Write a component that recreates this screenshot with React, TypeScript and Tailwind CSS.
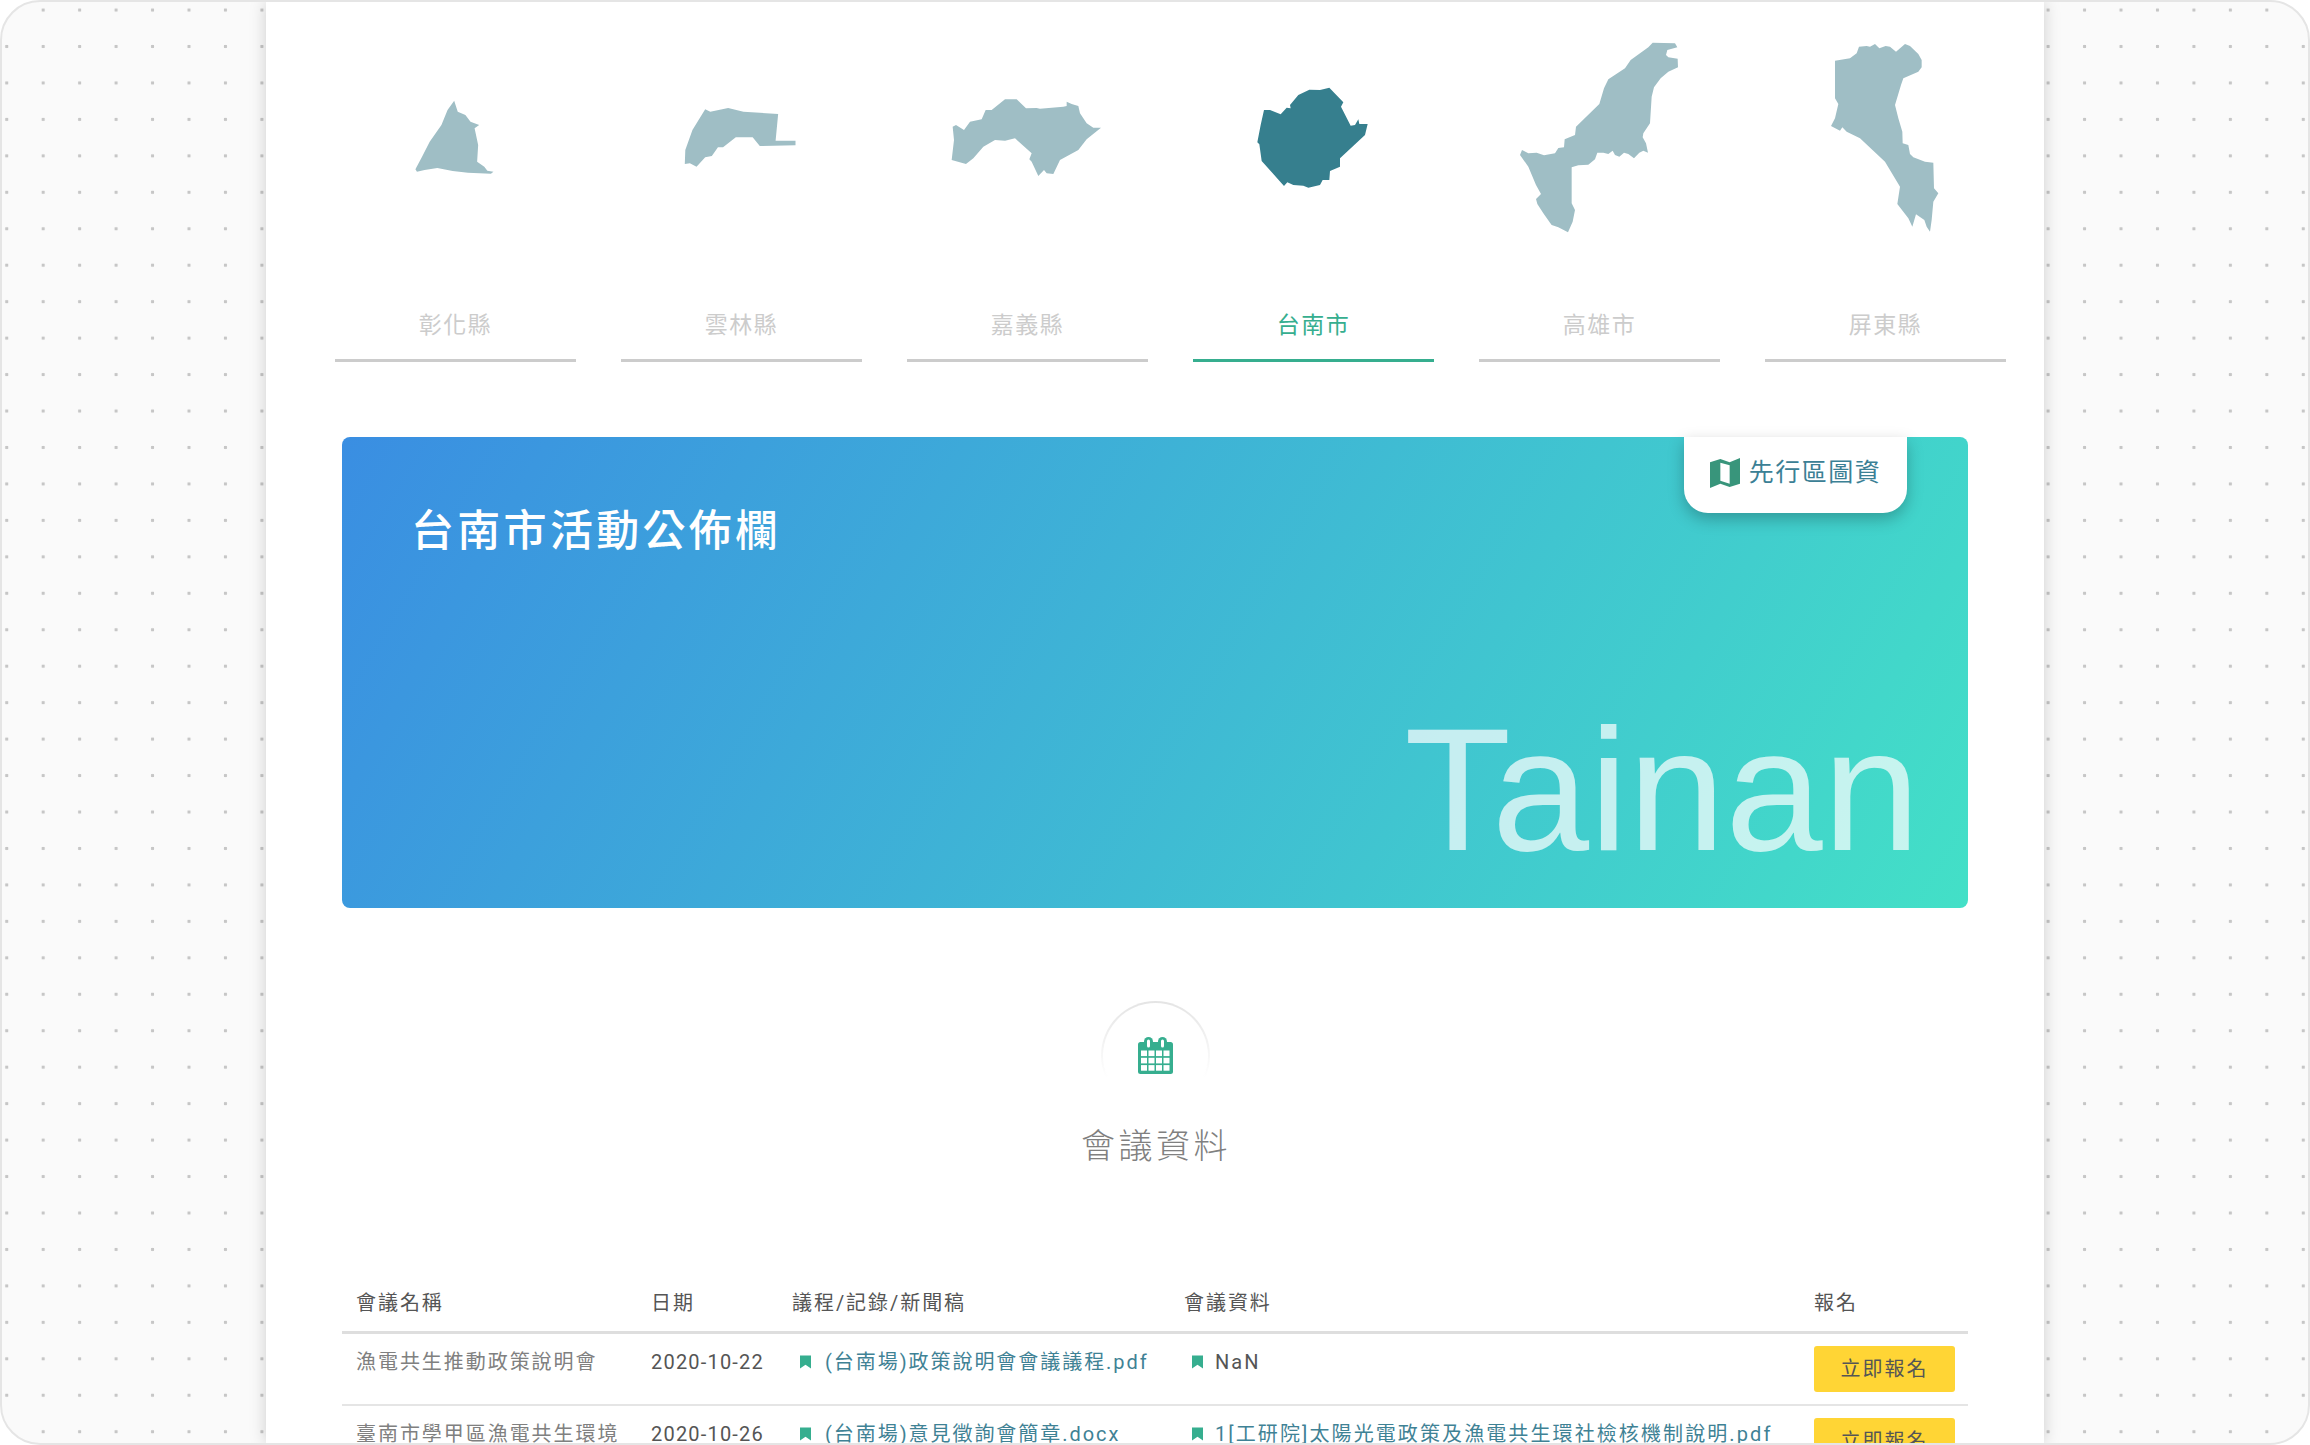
const FONT = "font-['Roboto','Noto_Sans_CJK_TC',sans-serif]";

const regions = [
  {
    name: "彰化縣",
    transform: "translate(-45,-30) scale(1.5306,1)",
    d: "M263,242 L270,275 L285,285 L295,305 L312,315 L303,325 L310,375 L308,425 L322,440 L328,452 L340,455 L335,461 L290,458 L260,453 L230,444 L205,450 L190,455 L187,448 L200,410 L215,365 L238,315 L250,270 Z",
  },
  {
    name: "雲林縣",
    transform: "translate(-903,-30) scale(1.5306,1)",
    d: "M755,268 L765,275 L800,264 L830,275 L898,282 L893,362 L932,362 L932,376 L862,378 L848,352 L815,352 L790,382 L780,382 L768,408 L755,412 L738,440 L725,430 L715,432 L716,390 L730,330 Z",
  },
  {
    name: "嘉義縣",
    transform: "translate(99,180)",
    d: "M195,28 L230,28 L258,55 L290,54 L300,56 L370,50 L380,48 L380,35 L395,42 L415,48 L420,70 L440,100 L460,113 L483,113 L440,148 L415,180 L360,210 L340,252 L320,250 L312,240 L295,258 L275,215 L268,208 L275,190 L225,145 L195,152 L165,150 L130,170 L100,205 L78,222 L35,210 L42,150 L38,110 L48,105 L72,120 L90,95 L125,88 L137,60 L155,60 Z",
  },
  {
    name: "台南市",
    active: true,
    transform: "translate(141,135)",
    d: "M208,44 L240,45 L268,38 L310,82 L303,95 L332,152 L345,150 L355,133 L358,147 L383,147 L375,180 L300,250 L300,275 L270,288 L268,315 L248,315 L240,330 L205,338 L190,332 L160,330 L142,322 L132,333 L65,258 L58,208 L52,202 L62,150 L72,105 L90,105 L122,118 L140,98 L152,100 L150,90 L175,60 Z",
  },
  {
    name: "高雄市",
    transform: "translate(63,0)",
    d: "M458,38 L525,40 L532,52 L502,60 L498,75 L505,82 L533,86 L534,112 L505,125 L482,145 L462,172 L455,200 L450,280 L430,310 L428,322 L438,340 L444,368 L430,362 L418,368 L402,385 L385,372 L372,368 L358,380 L345,375 L338,362 L325,372 L310,368 L292,368 L285,388 L265,404 L235,406 L215,412 L215,520 L225,540 L218,575 L204,607 L175,592 L155,585 L150,578 L130,550 L112,522 L108,507 L123,492 L108,465 L85,410 L60,375 L66,360 L85,370 L110,368 L132,376 L165,370 L175,354 L192,352 L194,328 L225,315 L228,290 L298,222 L312,175 L325,148 L375,115 L392,90 L445,52 Z",
  },
  {
    name: "屏東縣",
    transform: "translate(150,0)",
    d: "M132,50 L155,48 L165,50 L180,42 L193,55 L212,48 L225,50 L243,65 L270,42 L285,48 L310,72 L320,90 L320,112 L310,125 L265,145 L258,165 L240,225 L250,265 L262,305 L263,340 L280,345 L285,372 L295,382 L330,395 L355,398 L357,475 L370,490 L355,515 L350,570 L345,605 L335,590 L328,570 L303,553 L292,590 L280,565 L247,522 L255,470 L210,395 L135,325 L95,305 L82,292 L75,302 L48,288 L60,265 L70,222 L60,205 L60,92 L105,85 L125,70 Z",
  },
];

const rows = [
  {
    title: "漁電共生推動政策說明會",
    date: "2020-10-22",
    agenda: "(台南場)政策說明會會議議程.pdf",
    file: "NaN",
  },
  {
    title: "臺南市學甲區漁電共生環境",
    date: "2020-10-26",
    agenda: "(台南場)意見徵詢會簡章.docx",
    file: "1[工研院]太陽光電政策及漁電共生環社檢核機制說明.pdf",
  },
];

function Bookmark() {
  return (
    <svg viewBox="0 0 12 14" className="mr-3 ml-[8px] inline-block h-[14px] w-[11px] shrink-0 fill-[#36ae8f]">
      <path d="M0,0 H12 V14 L6,10 L0,14 Z" />
    </svg>
  );
}

function MapIcon() {
  return (
    <svg viewBox="0 0 29 29" className="h-[30px] w-[30px] fill-[#38957b]">
      <path
        fillRule="evenodd"
        d="M0,4 L10,1 L19,4 L29,0 V25 L19,28 L10,25 L0,29 Z M10,4.5 V22 L19,25 V7 Z"
      />
    </svg>
  );
}

function CalendarIcon() {
  const cells = [];
  for (let r = 0; r < 3; r++) {
    for (let c = 0; c < 4; c++) {
      cells.push(<rect key={`${r}-${c}`} x={3 + c * 7.5} y={13.5 + r * 7.3} width={6} height={5.6} fill="#fff" />);
    }
  }
  return (
    <svg viewBox="0 0 35 37" className="h-[37px] w-[35px]">
      <rect x="0" y="5" width="35" height="32" rx="2.5" fill="#36ae8f" />
      <rect x="6" y="0" width="9" height="12" rx="4.5" fill="#36ae8f" />
      <rect x="20" y="0" width="9" height="12" rx="4.5" fill="#36ae8f" />
      <rect x="9" y="2.5" width="3" height="8" rx="1.5" fill="#fff" />
      <rect x="23" y="2.5" width="3" height="8" rx="1.5" fill="#fff" />
      {cells}
    </svg>
  );
}

export default function App() {
  return (
    <div className={`h-[1445px] w-full overflow-hidden bg-white ${FONT}`}>
      <div className="h-full overflow-hidden rounded-[40px] border-2 border-[#e5e5e5] bg-[#fafafa] bg-[radial-gradient(circle,#c6c6c6_1.4px,transparent_2px)] bg-[length:36.46px_36.46px] bg-[position:-13.5px_-10.2px]">
        <div className="mx-auto h-full w-[1778px] bg-white pt-[28px] shadow-[0_0_16px_rgba(0,0,0,0.18)]">
          <div className="flex gap-[45px] pl-[69px]">
            {regions.map((region) => (
              <div key={region.name} className="w-[241px]">
                <svg viewBox="0 0 723 750" className="block h-[250px] w-[241px]">
                  <path
                    d={region.d}
                    transform={region.transform}
                    fill={region.active ? "#367f8e" : "#9fbec5"}
                  />
                </svg>
                <div
                  className={`mt-[31px] border-b-[3px] pb-[18px] text-center text-[23px] leading-[30px] tracking-[1.5px] ${
                    region.active ? "border-[#36ae8f] text-[#36ae8f]" : "border-[#cccccc] text-[#cccccc]"
                  }`}
                >
                  {region.name}
                </div>
              </div>
            ))}
          </div>

          <div className="relative mx-[76px] mt-[75px] flex h-[471px] flex-col justify-between rounded-[8px] bg-[linear-gradient(120deg,#3a8ee2,#43e0c7)] pt-[64px] pr-[48px] pl-[69px]">
            <h1 className="text-[43px] leading-[60px] font-medium tracking-[3.3px] text-white">台南市活動公佈欄</h1>
            <div className="mb-[32px] text-right font-['Liberation_Sans',sans-serif] text-[175px] leading-[172px] text-white/70">
              Tainan
            </div>
            <div className="absolute top-0 right-[61px] flex h-[76px] w-[223px] items-center justify-center gap-[9px] rounded-b-[24px] bg-white pb-[5px] shadow-[0_6px_16px_rgba(0,0,0,0.25)]">
              <MapIcon />
              <span className="text-[25px] tracking-[1.5px] text-[#3b8095]">先行區圖資</span>
            </div>
          </div>

          <div className="mt-[93px] flex flex-col items-center">
            <div className="h-[109px] w-[109px] rounded-full bg-[linear-gradient(to_bottom,#e4e4e4,#ffffff_70%)] p-[2px]">
              <div className="flex h-full w-full items-center justify-center rounded-full bg-white">
                <CalendarIcon />
              </div>
            </div>
            <h2 className="mt-[14px] pl-[2px] text-[34px] leading-[44px] font-light tracking-[3.5px] text-[#808080]">會議資料</h2>
          </div>

          <table className="mx-[76px] mt-[109px] w-[1626px] table-fixed border-separate border-spacing-0 text-[20px] leading-[28px] tracking-[1.95px]">
            <colgroup>
              <col className="w-[295px]" />
              <col className="w-[141px]" />
              <col className="w-[392px]" />
              <col className="w-[630px]" />
              <col className="w-[168px]" />
            </colgroup>
            <thead>
              <tr className="text-left text-[#555555]">
                {["會議名稱", "日期", "議程/記錄/新聞稿", "會議資料", "報名"].map((label) => (
                  <th key={label} className="border-b-[3px] border-[#dedede] px-[14px] pt-[12px] pb-[14px] font-normal">
                    {label}
                  </th>
                ))}
              </tr>
            </thead>
            <tbody>
              {rows.map((row) => (
                <tr key={row.date}>
                  <td className="border-b-2 border-[#e5e5e5] px-[14px] py-[14px] align-top whitespace-nowrap text-[#808080]">{row.title}</td>
                  <td className="border-b-2 border-[#e5e5e5] px-[14px] py-[14px] align-top tracking-[1.2px] text-[#555555]">{row.date}</td>
                  <td className="border-b-2 border-[#e5e5e5] px-[14px] py-[14px] align-top">
                    <div className="flex items-center whitespace-nowrap text-[#3f8295]">
                      <Bookmark />
                      <span className="ml-[2px]">{row.agenda}</span>
                    </div>
                  </td>
                  <td className="border-b-2 border-[#e5e5e5] px-[14px] py-[14px] align-top">
                    <div className={`flex items-center whitespace-nowrap tracking-[2.1px] ${row.file === "NaN" ? "text-[#555555]" : "text-[#3f8295]"}`}>
                      <Bookmark />
                      {row.file}
                    </div>
                  </td>
                  <td className="border-b-2 border-[#e5e5e5] py-[12px] pr-[12px] pl-[14px] align-top">
                    <button
                      type="button"
                      className="h-[46px] w-[141px] rounded-[3px] bg-[#ffd535] text-[#555555]"
                    >
                      立即報名
                    </button>
                  </td>
                </tr>
              ))}
            </tbody>
          </table>
        </div>
      </div>
    </div>
  );
}
